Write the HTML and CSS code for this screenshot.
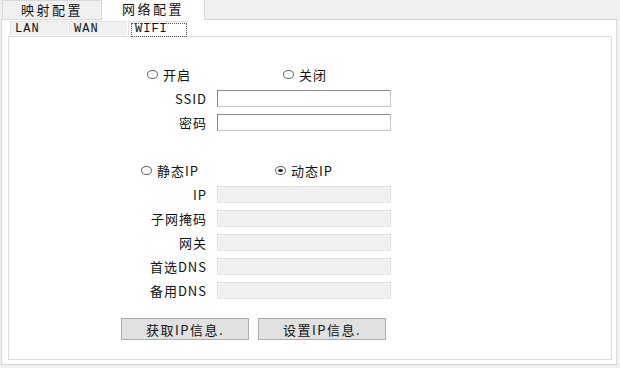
FILE: index.html
```html
<!DOCTYPE html>
<html lang="zh-CN">
<head>
  <meta charset="UTF-8">
  <title>网络配置</title>
  <link rel="stylesheet" href="styles.css">
</head>
<body>
  <div class="window">
    <div class="tabs">
      <div class="tab">映射配置</div>
      <div class="tab active">网络配置</div>
    </div>
    <div class="pane">
      <div class="subtabs">
        <div class="subtab">LAN</div>
        <div class="subtab">WAN</div>
        <div class="subtab active"><span class="focus">WIFI</span></div>
      </div>
      <div class="panel">
        <div class="radio-row first">
          <label class="radio-item"><span class="radio"></span>开启</label>
          <label class="radio-item"><span class="radio"></span>关闭</label>
        </div>
        <div class="form top">
          <span class="lbl">SSID</span><span class="field"></span>
          <span class="lbl">密码</span><span class="field"></span>
        </div>
        <div class="radio-row second">
          <label class="radio-item"><span class="radio"></span>静态IP</label>
          <label class="radio-item"><span class="radio checked"></span>动态IP</label>
        </div>
        <div class="form ip">
          <span class="lbl">IP</span><span class="field off"></span>
          <span class="lbl">子网掩码</span><span class="field off"></span>
          <span class="lbl">网关</span><span class="field off"></span>
          <span class="lbl">首选DNS</span><span class="field off"></span>
          <span class="lbl">备用DNS</span><span class="field off"></span>
        </div>
        <div class="actions">
          <button class="btn">获取IP信息.</button>
          <button class="btn">设置IP信息.</button>
        </div>
      </div>
    </div>
  </div>
</body>
</html>
```

FILE: styles.css
```css
body { margin: 0; background: #f0f0f0; font-family: "Noto Sans CJK SC", "Liberation Sans", sans-serif; font-size: 13px; color: #111; }
.window { width: 620px; height: 368px; background: #f0f0f0; overflow: hidden; }

/* outer tabs */
.tabs { display: flex; height: 19px; padding-left: 2px; }
.tab { width: 98px; height: 18px; line-height: 18px; text-align: center; letter-spacing: 2.5px; border: 1px solid #d9d9d9; border-bottom: none; border-right: none; }
.tab.active { width: 102px; height: 20px; background: #fff; border-right: 1px solid #d9d9d9; position: relative; z-index: 1; margin-top: -1px; }

.pane { margin-left: 1px; width: 614px; height: 344px; background: #fff; border: 1px solid #d9d9d9; }

/* inner tabs */
.subtabs { display: flex; margin: 1px 0 0 8px; height: 15px; }
.subtab { width: 58px; height: 14px; line-height: 14px; padding-left: 4px; box-sizing: border-box; font-family: "Liberation Mono", monospace; font-size: 12px; letter-spacing: 1px; background: #f0f0f0; border: 1px solid #e3e3e3; border-bottom: none; border-right: none; margin-right: 1px; }
.subtab.active { width: 61px; background: #fff; padding: 1px 2px 0; }
.focus { display: block; height: 12px; line-height: 11px; padding-left: 3px; border: 1px dotted #555; }

.panel { margin-left: 6px; width: 602px; height: 322px; border: 1px solid #dcdcdc; }

/* radios */
.radio-row { display: flex; height: 16px; align-items: center; }
.radio-row.first { margin: 29px 0 0 138px; }
.radio-row.second { margin: 31px 0 0 132px; }
.radio-item { display: flex; align-items: center; width: 136px; letter-spacing: 1px; }
.radio-row.second .radio-item { width: 134px; }
.radio { width: 9px; height: 7px; border: 1px solid #666; border-radius: 50%; margin-right: 5px; display: flex; align-items: center; justify-content: center; }
.radio.checked::after { content: ""; width: 5px; height: 3px; border-radius: 50%; background: #222; }

/* forms */
.form { display: grid; grid-template-columns: 87px 174px; column-gap: 10px; row-gap: 7px; margin-left: 111px; }
.form.top { margin-top: 8px; }
.form.ip { margin-top: 8px; }
.lbl { text-align: right; height: 17px; line-height: 17px; letter-spacing: 1px; }
.field { height: 17px; box-sizing: border-box; border: 1px solid #8a8a8a; border-right-color: #c8c8c8; border-bottom-color: #c8c8c8; background: #fff; }
.field.off { background: #f0f0f0; border: 1px solid #e4e4e4; }

/* buttons */
.actions { display: flex; gap: 9px; margin: 19px 0 0 112px; }
.btn { width: 128px; height: 22px; padding: 0; background: #e1e1e1; border: 1px solid #adadad; font-family: inherit; font-size: 13px; letter-spacing: 1.5px; color: #111; }
```
